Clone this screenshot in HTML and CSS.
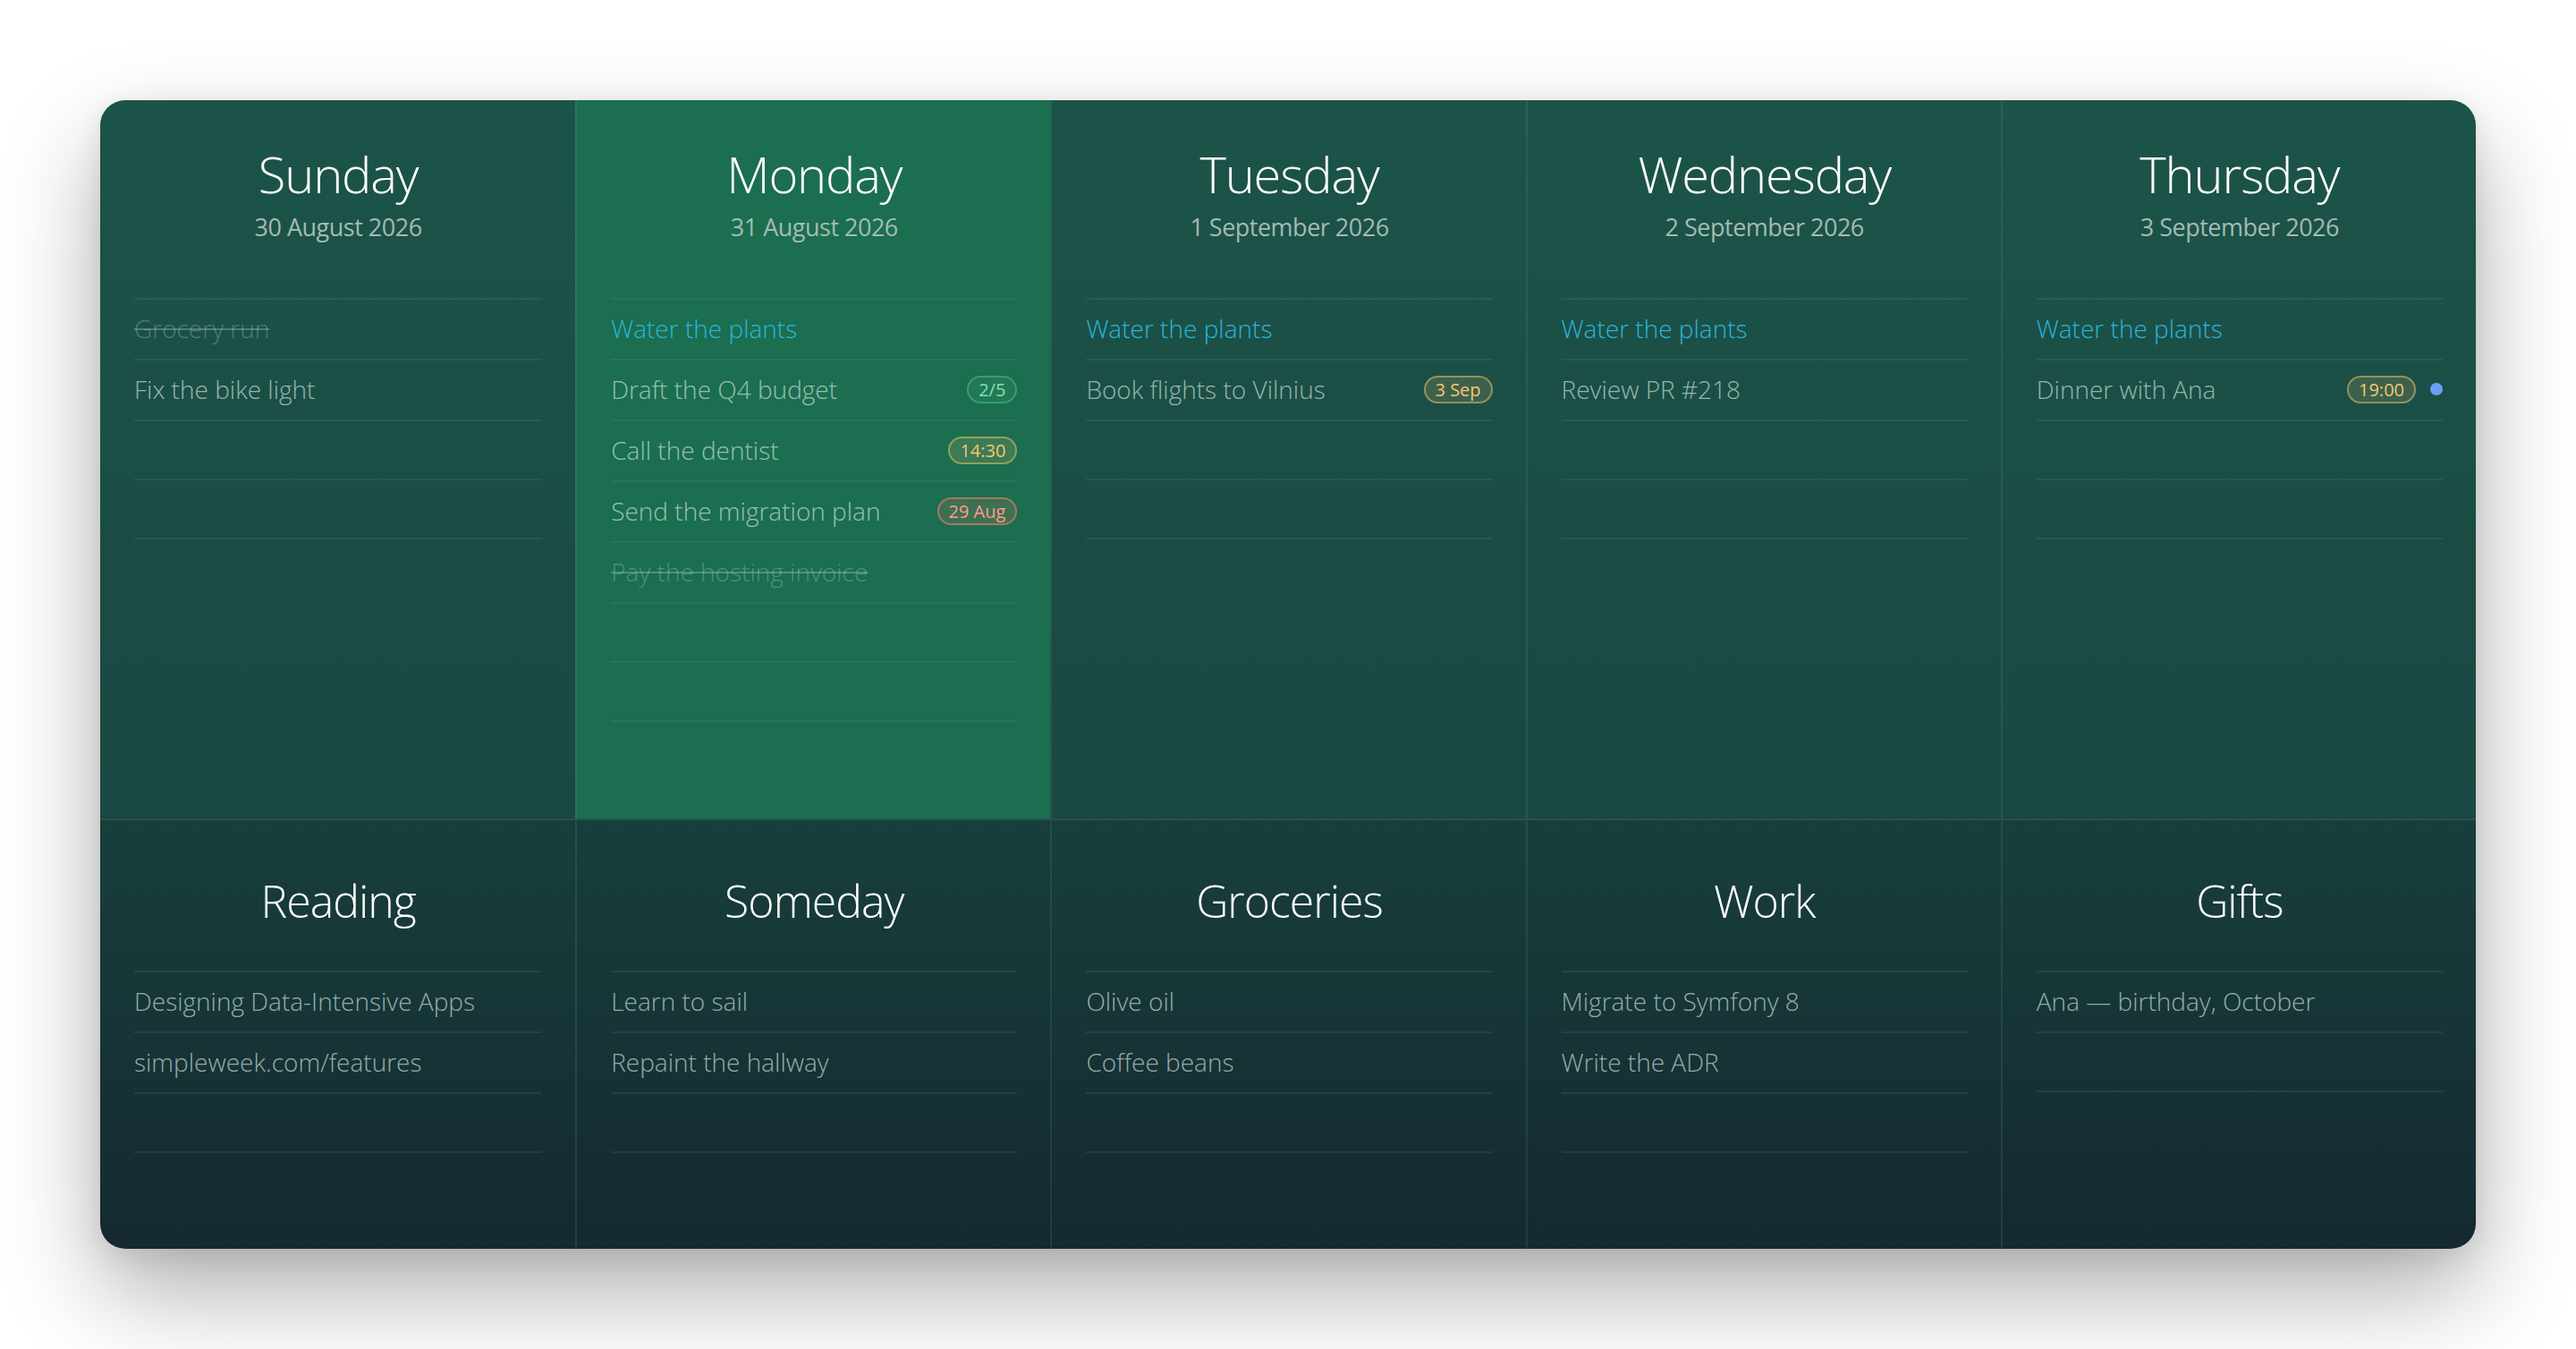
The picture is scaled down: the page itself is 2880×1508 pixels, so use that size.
FILE: index.html
```html
<!DOCTYPE html>
<html lang="en">
<head>
<meta charset="utf-8">
<title>Week</title>
<link rel="stylesheet" href="styles.css">
</head>
<body>
<main class="board">
  <section class="cell day">
    <header class="head"><h2 class="title">Sunday</h2><div class="date">30 August 2026</div></header>
    <ul class="list">
      <li class="item done"><span class="text">Grocery run</span></li>
      <li class="item"><span class="text">Fix the bike light</span></li>
      <li class="empty"></li><li class="empty"></li>
    </ul>
  </section>
  <section class="cell day today">
    <header class="head"><h2 class="title">Monday</h2><div class="date">31 August 2026</div></header>
    <ul class="list">
      <li class="item repeat"><span class="text">Water the plants</span></li>
      <li class="item"><span class="text">Draft the Q4 budget</span><span class="badge green">2/5</span></li>
      <li class="item"><span class="text">Call the dentist</span><span class="badge yellow">14:30</span></li>
      <li class="item"><span class="text">Send the migration plan</span><span class="badge red">29 Aug</span></li>
      <li class="item done"><span class="text">Pay the hosting invoice</span></li>
      <li class="empty"></li><li class="empty"></li>
    </ul>
  </section>
  <section class="cell day">
    <header class="head"><h2 class="title">Tuesday</h2><div class="date">1 September 2026</div></header>
    <ul class="list">
      <li class="item repeat"><span class="text">Water the plants</span></li>
      <li class="item"><span class="text">Book flights to Vilnius</span><span class="badge yellow">3 Sep</span></li>
      <li class="empty"></li><li class="empty"></li>
    </ul>
  </section>
  <section class="cell day">
    <header class="head"><h2 class="title">Wednesday</h2><div class="date">2 September 2026</div></header>
    <ul class="list">
      <li class="item repeat"><span class="text">Water the plants</span></li>
      <li class="item"><span class="text">Review PR #218</span></li>
      <li class="empty"></li><li class="empty"></li>
    </ul>
  </section>
  <section class="cell day">
    <header class="head"><h2 class="title">Thursday</h2><div class="date">3 September 2026</div></header>
    <ul class="list">
      <li class="item repeat"><span class="text">Water the plants</span></li>
      <li class="item"><span class="text">Dinner with Ana</span><span class="badge yellow">19:00</span><span class="dot"></span></li>
      <li class="empty"></li><li class="empty"></li>
    </ul>
  </section>

  <section class="cell group">
    <header class="head"><h2 class="title">Reading</h2></header>
    <ul class="list">
      <li class="item"><span class="text">Designing Data-Intensive Apps</span></li>
      <li class="item"><span class="text">simpleweek.com/features</span></li>
      <li class="empty"></li>
    </ul>
  </section>
  <section class="cell group">
    <header class="head"><h2 class="title">Someday</h2></header>
    <ul class="list">
      <li class="item"><span class="text">Learn to sail</span></li>
      <li class="item"><span class="text">Repaint the hallway</span></li>
      <li class="empty"></li>
    </ul>
  </section>
  <section class="cell group">
    <header class="head"><h2 class="title">Groceries</h2></header>
    <ul class="list">
      <li class="item"><span class="text">Olive oil</span></li>
      <li class="item"><span class="text">Coffee beans</span></li>
      <li class="empty"></li>
    </ul>
  </section>
  <section class="cell group">
    <header class="head"><h2 class="title">Work</h2></header>
    <ul class="list">
      <li class="item"><span class="text">Migrate to Symfony 8</span></li>
      <li class="item"><span class="text">Write the ADR</span></li>
      <li class="empty"></li>
    </ul>
  </section>
  <section class="cell group">
    <header class="head"><h2 class="title">Gifts</h2></header>
    <ul class="list">
      <li class="item"><span class="text">Ana — birthday, October</span></li>
      <li class="empty"></li>
    </ul>
  </section>
</main>
</body>
</html>
```

FILE: styles.css
```css
* { box-sizing: border-box; }

html, body {
  margin: 0;
  padding: 0;
  background: #ffffff;
}

body {
  font-family: "Open Sans", "Noto Sans", sans-serif;
  padding: 112px;
  width: 2880px;
  height: 1508px;
  overflow: hidden;
}

.board {
  width: 2656px;
  height: 1284px;
  border-radius: 28px;
  overflow: hidden;
  display: grid;
  grid-template-columns: repeat(5, 1fr);
  grid-template-rows: 803px 481px;
  background: linear-gradient(to bottom, #1c5449 0px, #1a4842 803px, #183f3b 803px, #152931 100%);
  box-shadow: 0 48px 110px rgba(0, 0, 0, 0.32), 0 8px 30px rgba(0, 0, 0, 0.08);
}

.cell {
  padding: 0 37px 0 38px;
  min-width: 0;
}

.cell:not(:nth-child(5n + 1)) {
  border-left: 2px solid rgba(120, 185, 168, 0.13);
}

.group {
  border-top: 2px solid rgba(120, 185, 168, 0.16);
}

.today {
  background: #1b6e50;
}

.head {
  text-align: center;
}

.day .head {
  padding-top: 44px;
  height: 221px;
}

.group .head {
  padding-top: 52px;
  height: 168px;
}

.title {
  margin: 0;
  font-size: 56px;
  font-weight: 300;
  line-height: 76px;
  letter-spacing: -0.02em;
  color: #ffffff;
}

.group .title {
  font-size: 50px;
}

.date {
  margin-top: 3px;
  font-size: 27px;
  font-weight: 400;
  line-height: 38px;
  letter-spacing: -0.5px;
  color: #a2bbb3;
}

.list {
  list-style: none;
  margin: 0;
  padding: 0;
  border-top: 2px solid rgba(120, 185, 168, 0.12);
}

.item,
.empty {
  border-bottom: 2px solid rgba(120, 185, 168, 0.12);
}

.item {
  height: 68px;
  display: flex;
  align-items: center;
  padding-bottom: 2px;
}

.empty {
  height: 66px;
}

.text {
  flex: 1;
  min-width: 0;
  font-size: 28px;
  font-weight: 300;
  line-height: 38px;
  color: rgba(214, 232, 226, 0.68);
  white-space: nowrap;
}

.repeat .text {
  color: #2bb4da;
}

.done .text {
  color: rgba(200, 230, 220, 0.3);
  text-decoration: line-through;
  text-decoration-thickness: 2px;
}

.badge {
  flex: none;
  height: 31px;
  padding: 0 11px;
  border-radius: 16px;
  border: 2px solid;
  font-size: 20px;
  font-weight: 400;
  line-height: 27px;
  white-space: nowrap;
}

.badge.green {
  color: #86dfb4;
  border-color: rgba(70, 190, 130, 0.55);
  background: rgba(60, 170, 115, 0.18);
}

.badge.yellow {
  color: #f7c56d;
  border-color: rgba(235, 195, 100, 0.5);
  background: rgba(220, 190, 110, 0.17);
}

.badge.red {
  color: #ff9c8b;
  border-color: rgba(240, 125, 105, 0.6);
  background: rgba(220, 120, 100, 0.18);
}

.dot {
  flex: none;
  width: 14px;
  height: 14px;
  margin-left: 16px;
  border-radius: 50%;
  background: #6e9df6;
}
```
